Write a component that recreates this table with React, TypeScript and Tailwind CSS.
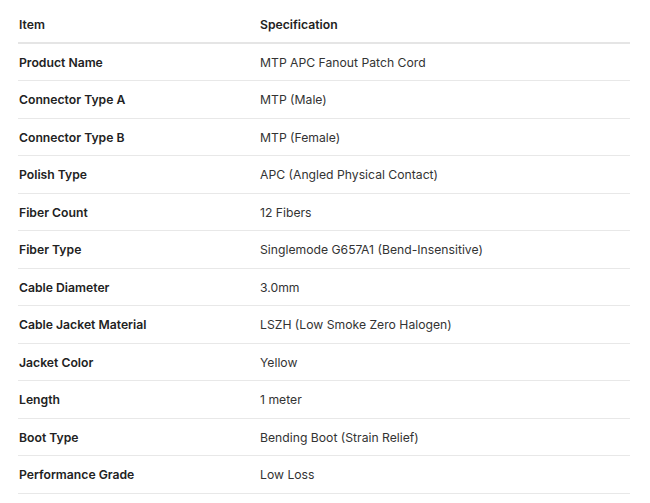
const SPECS: [string, string][] = [
  ["Product Name", "MTP APC Fanout Patch Cord"],
  ["Connector Type A", "MTP (Male)"],
  ["Connector Type B", "MTP (Female)"],
  ["Polish Type", "APC (Angled Physical Contact)"],
  ["Fiber Count", "12 Fibers"],
  ["Fiber Type", "Singlemode G657A1 (Bend-Insensitive)"],
  ["Cable Diameter", "3.0mm"],
  ["Cable Jacket Material", "LSZH (Low Smoke Zero Halogen)"],
  ["Jacket Color", "Yellow"],
  ["Length", "1 meter"],
  ["Boot Type", "Bending Boot (Strain Relief)"],
  ["Performance Grade", "Low Loss"],
]

export default function App() {
  return (
    <div className="min-h-[503px] w-[650px] bg-white pl-[18px] pr-[20px] pt-[6px] font-['Inter',sans-serif] text-[12.2px] text-[#222]">
      <table className="w-full border-collapse">
        <thead>
          <tr className="h-[37px] border-b-2 border-[#e5e5e5]">
            <th className="w-[242px] pl-px pt-[2px] text-left font-semibold">Item</th>
            <th className="pt-[2px] text-left font-semibold">Specification</th>
          </tr>
        </thead>
        <tbody>
          {SPECS.map(([k, v]) => (
            <tr key={k} className="h-[37.5px] border-b border-[#e8e8e8]">
              <td className="pl-px pt-[2px] font-semibold">{k}</td>
              <td className="pt-[2px] text-[#333]">{v}</td>
            </tr>
          ))}
        </tbody>
      </table>
    </div>
  )
}
